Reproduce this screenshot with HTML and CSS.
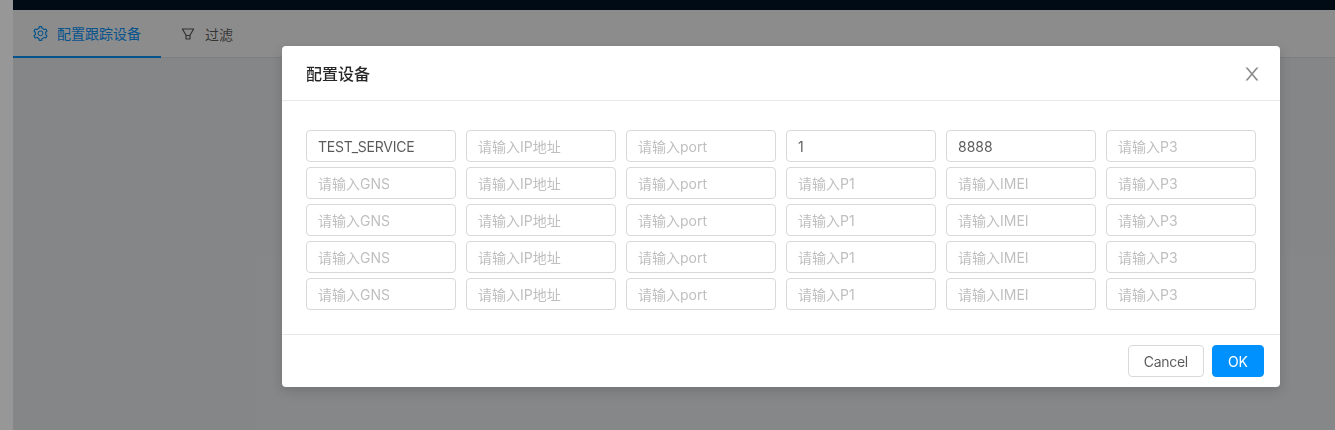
FILE: index.html
```html
<!DOCTYPE html>
<html lang="zh-CN">
<head>
<meta charset="utf-8">
<title>配置设备</title>
<link rel="stylesheet" href="styles.css">
</head>
<body>
<div class="page">
  <div class="topbar"></div>
  <div class="tabs">
    <div class="tab active">
      <svg class="tab-icon gear" viewBox="64 64 896 896" fill="currentColor"><path d="M924.8 625.7l-65.5-56c3.1-19 4.7-38.4 4.7-57.8s-1.6-38.8-4.7-57.8l65.5-56a32.03 32.03 0 0 0 9.3-35.2l-.9-2.6a443.74 443.74 0 0 0-79.7-137.9l-1.8-2.1a32.12 32.12 0 0 0-35.1-9.5l-81.3 28.9c-30-24.6-63.5-44-99.7-57.6l-15.7-85a32.05 32.05 0 0 0-25.8-25.7l-2.7-.5c-52.1-9.4-106.9-9.4-159 0l-2.7.5a32.05 32.05 0 0 0-25.8 25.7l-15.8 85.4a351.86 351.86 0 0 0-99 57.4l-81.9-29.1a32 32 0 0 0-35.1 9.5l-1.8 2.1a446.02 446.02 0 0 0-79.7 137.9l-.9 2.6c-4.5 12.5-.8 26.5 9.3 35.2l66.3 56.6c-3.1 18.8-4.6 38-4.6 57.1 0 19.2 1.5 38.4 4.6 57.1L99 625.5a32.03 32.03 0 0 0-9.3 35.2l.9 2.6c18.1 50.4 44.9 96.9 79.7 137.9l1.8 2.1a32.12 32.12 0 0 0 35.1 9.5l81.9-29.1c29.8 24.5 63.1 43.9 99 57.4l15.8 85.4a32.05 32.05 0 0 0 25.8 25.7l2.7.5a449.4 449.4 0 0 0 159 0l2.7-.5a32.05 32.05 0 0 0 25.8-25.7l15.7-85a350 350 0 0 0 99.7-57.6l81.3 28.9a32 32 0 0 0 35.1-9.5l1.8-2.1c34.8-41.1 61.6-87.5 79.7-137.9l.9-2.6c4.5-12.3.8-26.3-9.3-35zM788.3 465.9c2.5 15.1 3.8 30.6 3.8 46.1s-1.3 31-3.8 46.1l-6.6 40.1 74.7 63.9a370.03 370.03 0 0 1-42.6 73.6L721 702.8l-31.4 25.8c-23.9 19.6-50.5 35-79.3 45.8l-38.1 14.3-17.9 97a377.5 377.5 0 0 1-85 0l-17.9-97.2-37.8-14.5c-28.5-10.8-55-26.2-78.7-45.7l-31.4-25.9-93.4 33.2c-17-22.9-31.2-47.6-42.6-73.6l75.5-64.5-6.5-40c-2.4-14.9-3.7-30.3-3.7-45.5 0-15.3 1.2-30.6 3.7-45.5l6.5-40-75.5-64.5c11.3-26.1 25.6-50.7 42.6-73.6l93.4 33.2 31.4-25.9c23.7-19.5 50.2-34.9 78.7-45.7l37.9-14.3 17.9-97.2c28.1-3.2 56.8-3.2 85 0l17.9 97 38.1 14.3c28.7 10.8 55.4 26.2 79.3 45.8l31.4 25.8 92.8-32.9c17 22.9 31.2 47.6 42.6 73.6L781.8 426l6.5 39.9zM512 326c-97.2 0-176 78.8-176 176s78.8 176 176 176 176-78.8 176-176-78.8-176-176-176zm79.2 255.2A111.6 111.6 0 0 1 512 614c-29.9 0-58-11.7-79.2-32.8A111.6 111.6 0 0 1 400 502c0-29.9 11.7-58 32.8-79.2C454 401.6 482.1 390 512 390c29.9 0 58 11.6 79.2 32.8A111.6 111.6 0 0 1 624 502c0 29.9-11.7 58-32.8 79.2z"/></svg>
      <span>配置跟踪设备</span>
    </div>
    <div class="tab">
      <svg class="tab-icon" viewBox="64 64 896 896" fill="currentColor"><path d="M880.1 154H143.9c-24.5 0-39.8 26.7-27.5 48L349 597.4V838c0 17.7 14.2 32 31.8 32h262.4c17.6 0 31.8-14.3 31.8-32V597.4L907.7 202c12.2-21.3-3.1-48-27.6-48zM603.4 798H420.6V642h182.9v156zm9.6-236.6l-9.5 16.6h-183l-9.5-16.6L212.7 226h598.6L613 561.4z"/></svg>
      <span>过滤</span>
    </div>
  </div>
  <div class="content"></div>
  <div class="mask"></div>
</div>
<div class="modal">
  <div class="modal-header">
    <div class="modal-title">配置设备</div>
    <svg class="modal-close" viewBox="64 64 896 896" fill="currentColor"><path d="M563.8 512l262.5-312.9c4.4-5.2.7-13.1-6.1-13.1h-79.8c-4.7 0-9.2 2.1-12.3 5.7L511.6 449.8 295.1 191.7c-3-3.6-7.5-5.7-12.3-5.7H203c-6.8 0-10.5 7.9-6.1 13.1L459.4 512 196.9 824.9A7.95 7.95 0 0 0 203 838h79.8c4.7 0 9.2-2.1 12.3-5.7l216.5-258.1 216.5 258.1c3 3.6 7.5 5.7 12.3 5.7h79.8c6.8 0 10.5-7.9 6.1-13.1L563.8 512z"/></svg>
  </div>
  <div class="modal-body">
    <input class="field tight" placeholder="请输入GNS" value="TEST_SERVICE">
    <input class="field" placeholder="请输入IP地址">
    <input class="field" placeholder="请输入port">
    <input class="field" placeholder="请输入P1" value="1">
    <input class="field" placeholder="请输入IMEI" value="8888">
    <input class="field" placeholder="请输入P3">

    <input class="field" placeholder="请输入GNS">
    <input class="field" placeholder="请输入IP地址">
    <input class="field" placeholder="请输入port">
    <input class="field" placeholder="请输入P1">
    <input class="field" placeholder="请输入IMEI">
    <input class="field" placeholder="请输入P3">

    <input class="field" placeholder="请输入GNS">
    <input class="field" placeholder="请输入IP地址">
    <input class="field" placeholder="请输入port">
    <input class="field" placeholder="请输入P1">
    <input class="field" placeholder="请输入IMEI">
    <input class="field" placeholder="请输入P3">

    <input class="field" placeholder="请输入GNS">
    <input class="field" placeholder="请输入IP地址">
    <input class="field" placeholder="请输入port">
    <input class="field" placeholder="请输入P1">
    <input class="field" placeholder="请输入IMEI">
    <input class="field" placeholder="请输入P3">

    <input class="field" placeholder="请输入GNS">
    <input class="field" placeholder="请输入IP地址">
    <input class="field" placeholder="请输入port">
    <input class="field" placeholder="请输入P1">
    <input class="field" placeholder="请输入IMEI">
    <input class="field" placeholder="请输入P3">
  </div>
  <div class="modal-footer">
    <button class="btn">Cancel</button>
    <button class="btn primary">OK</button>
  </div>
</div>
</body>
</html>
```
FILE: styles.css
```css
* { box-sizing: border-box; }
html, body { margin: 0; height: 100%; overflow: hidden; }
body {
  background: #979797;
  font-family: Inter, "Noto Sans CJK SC", sans-serif;
  font-size: 14px;
  color: rgba(0, 0, 0, 0.65);
}
.page {
  position: relative;
  margin-left: 13px;
  height: 100%;
  background: #f0f2f5;
  display: flex;
  flex-direction: column;
}
.topbar { height: 10px; background: #001529; }
.tabs {
  height: 48px;
  display: flex;
  background: #fff;
  border-bottom: 1px solid #e8e8e8;
}
.tab {
  width: 148px;
  height: 48px;
  display: flex;
  align-items: center;
  gap: 10px;
  padding-left: 20px;
  flex: none;
}
.tab + .tab { width: auto; padding-left: 20px; }
.tab.active { color: #0a98ff; border-bottom: 2px solid #0a98ff; }
.tab-icon { width: 14px; height: 14px; flex: none; }
.tab-icon.gear { width: 15px; height: 15px; margin-right: -1px; }
.content { flex: 1; background: #f3f5f8; }
.mask {
  position: absolute;
  inset: 0;
  background: rgba(0, 0, 0, 0.45);
}
.modal {
  position: fixed;
  left: 282px;
  top: 46px;
  width: 998px;
  background: #fff;
  border-radius: 4px;
  box-shadow: 0 4px 12px rgba(0, 0, 0, 0.15);
}
.modal-header {
  height: 55px;
  padding: 0 24px;
  display: flex;
  align-items: center;
  justify-content: space-between;
  border-bottom: 1px solid #e8e8e8;
}
.modal-title {
  font-size: 16px;
  font-weight: 500;
  color: rgba(0, 0, 0, 0.85);
  margin-top: -1px;
}
.modal-close {
  width: 18px;
  height: 18px;
  margin: 2px -5px 0 0;
  color: rgba(0, 0, 0, 0.45);
}
.modal-body {
  padding: 29px 24px 24px;
  display: grid;
  grid-template-columns: repeat(6, 150px);
  column-gap: 10px;
  row-gap: 5px;
}
.field {
  width: 150px;
  height: 32px;
  padding: 4px 11px;
  border: 1px solid #d9d9d9;
  border-radius: 4px;
  background: #fff;
  font: inherit;
  color: rgba(0, 0, 0, 0.65);
  outline: none;
}
.field.tight { letter-spacing: -0.25px; }
.field::placeholder { color: #bfbfbf; opacity: 1; letter-spacing: 0; }
.modal-footer {
  height: 53px;
  padding: 10px 16px;
  display: flex;
  justify-content: flex-end;
  gap: 8px;
  border-top: 1px solid #e8e8e8;
}
.btn {
  height: 32px;
  padding: 0 15px;
  border: 1px solid #d9d9d9;
  border-radius: 4px;
  background: #fff;
  font: inherit;
  letter-spacing: -0.3px;
  color: rgba(0, 0, 0, 0.65);
}
.btn.primary {
  background: #0091ff;
  border-color: #0091ff;
  color: #fff;
  letter-spacing: 0;
}
```
